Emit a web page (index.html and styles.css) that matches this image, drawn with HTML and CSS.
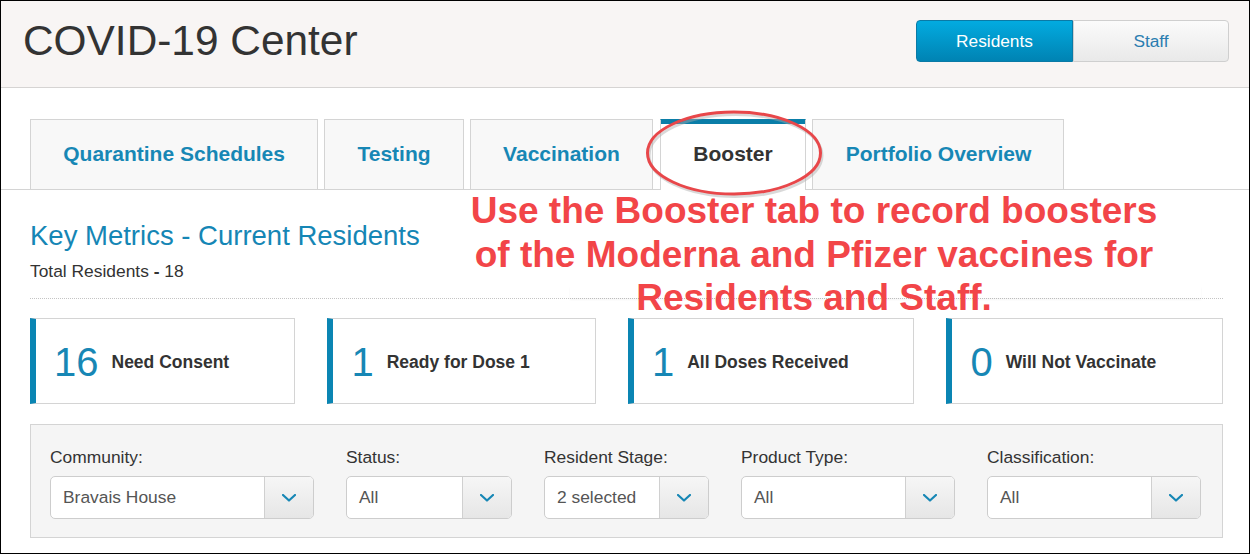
FILE: index.html
```html
<!DOCTYPE html>
<html lang="en">
<head>
<meta charset="utf-8">
<title>COVID-19 Center</title>
<link rel="stylesheet" href="styles.css">
</head>
<body>
<div class="frame">
  <header class="topbar">
    <h1 class="title">COVID-19 Center</h1>
    <div class="toggle">
      <button class="toggle-btn is-on">Residents</button>
      <button class="toggle-btn">Staff</button>
    </div>
  </header>

  <nav class="tabs">
    <a class="tab">Quarantine Schedules</a>
    <a class="tab">Testing</a>
    <a class="tab">Vaccination</a>
    <a class="tab is-active">Booster</a>
    <a class="tab">Portfolio Overview</a>
  </nav>

  <section class="metrics">
    <h2 class="metrics-title">Key Metrics - Current Residents</h2>
    <p class="metrics-total">Total Residents <b>-</b> 18</p>
    <div class="dots"></div>

    <div class="cards">
      <div class="card"><span class="card-num">16</span><span class="card-label">Need Consent</span></div>
      <div class="card"><span class="card-num">1</span><span class="card-label">Ready for Dose 1</span></div>
      <div class="card"><span class="card-num">1</span><span class="card-label">All Doses Received</span></div>
      <div class="card"><span class="card-num">0</span><span class="card-label">Will Not Vaccinate</span></div>
    </div>

    <div class="filters">
      <div class="filter">
        <label class="filter-label">Community:</label>
        <div class="select"><span class="select-value">Bravais House</span><span class="select-btn"><svg class="chev" viewBox="0 0 14 8"><path d="M1 1l6 5.5L13 1"/></svg></span></div>
      </div>
      <div class="filter">
        <label class="filter-label">Status:</label>
        <div class="select"><span class="select-value">All</span><span class="select-btn"><svg class="chev" viewBox="0 0 14 8"><path d="M1 1l6 5.5L13 1"/></svg></span></div>
      </div>
      <div class="filter">
        <label class="filter-label">Resident Stage:</label>
        <div class="select"><span class="select-value">2 selected</span><span class="select-btn"><svg class="chev" viewBox="0 0 14 8"><path d="M1 1l6 5.5L13 1"/></svg></span></div>
      </div>
      <div class="filter">
        <label class="filter-label">Product Type:</label>
        <div class="select"><span class="select-value">All</span><span class="select-btn"><svg class="chev" viewBox="0 0 14 8"><path d="M1 1l6 5.5L13 1"/></svg></span></div>
      </div>
      <div class="filter">
        <label class="filter-label">Classification:</label>
        <div class="select"><span class="select-value">All</span><span class="select-btn"><svg class="chev" viewBox="0 0 14 8"><path d="M1 1l6 5.5L13 1"/></svg></span></div>
      </div>
    </div>
  </section>

  <svg class="ring" viewBox="0 0 190 100" width="190" height="100">
    <ellipse cx="94" cy="49" rx="86.5" ry="41" fill="none" stroke="#aaa" stroke-opacity="0.45" stroke-width="3" transform="translate(1.5 2.5)"/>
    <ellipse cx="94" cy="49" rx="86.5" ry="41" fill="none" stroke="#e8474a" stroke-width="3"/>
  </svg>

  <div class="annotation">Use the Booster tab to record boosters<br>of the Moderna and Pfizer vaccines for<br>Residents and Staff.</div>
</div>
</body>
</html>
```

FILE: styles.css
```css
* { box-sizing: border-box; }

html, body {
  margin: 0;
  padding: 0;
  background: #fff;
}

body {
  font-family: "Liberation Sans", Arial, sans-serif;
  color: #333;
}

.frame {
  position: relative;
  width: 1250px;
  height: 554px;
  border: 1px solid #000;
  overflow: hidden;
  background: #fff;
}

/* ---------- header ---------- */
.topbar {
  display: flex;
  justify-content: space-between;
  align-items: flex-start;
  height: 87px;
  padding: 16px 20px 0 22px;
  background: #f8f5f4;
  border-bottom: 1px solid #d6d4d3;
}

.title {
  margin: 0;
  font-size: 42.4px;
  line-height: 48px;
  font-weight: 400;
  color: #333;
}

.toggle {
  display: flex;
  margin-top: 3px;
}

.toggle-btn {
  height: 42px;
  width: 156px;
  font-family: inherit;
  font-size: 17.3px;
  border: 1px solid #cfcfcf;
  background: linear-gradient(#fbfbfb, #e9e9e9);
  color: #2a7db0;
  padding: 0;
  border-radius: 0 4px 4px 0;
}

.toggle-btn.is-on {
  width: 157px;
  color: #fff;
  background: linear-gradient(#02abe0, #0083b3);
  border-color: #0a7aa6;
  border-radius: 4px 0 0 4px;
}

/* ---------- tabs ---------- */
.tabs {
  display: flex;
  gap: 6px;
  padding: 31px 0 0 29px;
  border-bottom: 1px solid #d4d4d4;
}

.tab {
  display: flex;
  align-items: center;
  height: 70px;
  padding: 0 32.25px 2px;
  border: 1px solid #d4d4d4;
  border-bottom: none;
  background: #f8f8f8;
  font-size: 21px;
  font-weight: 700;
  color: #1787b5;
}

.tab.is-active {
  height: 71px;
  margin-bottom: -1px;
  margin-left: 1px;
  margin-right: 0.5px;
  background: #fff;
  color: #333;
  border-top-color: #0a7ea8;
  box-shadow: inset 0 4px 0 #0a7ea8;
}

/* ---------- metrics ---------- */
.metrics {
  padding: 0 26px 0 29px;
}

.metrics-title {
  margin: 30px 0 0;
  font-size: 27.5px;
  line-height: 32px;
  font-weight: 400;
  color: #1586b5;
}

.metrics-total {
  margin: 9px 0 0;
  font-size: 17.4px;
  line-height: 20px;
  color: #333;
}

.dots {
  margin-top: 17px;
  border-top: 1px dotted #c4c4c4;
}

.cards {
  display: grid;
  grid-template-columns: 265fr 268fr 286fr 276fr;
  column-gap: 32px;
  margin-top: 19px;
}

.card {
  display: flex;
  align-items: center;
  height: 86px;
  padding: 2px 10px 0 18px;
  border: 1px solid #d4d4d4;
  border-left: 6px solid #0a85b3;
  background: #fff;
}

.card-num {
  font-size: 40px;
  line-height: 40px;
  color: #1787b5;
  margin-right: 13px;
}

.card-label {
  font-size: 17.5px;
  line-height: 20px;
  font-weight: 700;
  color: #333;
}

/* ---------- filters ---------- */
.filters {
  display: grid;
  grid-template-columns: 264px 166px 165px 214px 214px;
  column-gap: 32px;
  margin-top: 20px;
  padding: 22px 20px 18px 19px;
  background: #f5f5f5;
  border: 1px solid #d4d4d4;
}

.filter-label {
  display: block;
  font-size: 17.4px;
  line-height: 20px;
  color: #333;
}

.select {
  display: flex;
  height: 43px;
  margin-top: 9px;
  border: 1px solid #cdcdcd;
  border-radius: 5px;
  background: #fff;
  overflow: hidden;
}

.select-value {
  flex: 1;
  display: flex;
  align-items: center;
  padding-left: 12px;
  font-size: 17.4px;
  color: #555;
}

.select-btn {
  display: flex;
  align-items: center;
  justify-content: center;
  width: 49px;
  border-left: 1px solid #d0d0d0;
  background: linear-gradient(#f6f6f6, #e6e6e6);
}

.chev {
  width: 14px;
  height: 8px;
  fill: none;
  stroke: #1787b5;
  stroke-width: 2.2;
  stroke-linecap: round;
  stroke-linejoin: round;
}

/* ---------- overlays ---------- */
.ring {
  position: absolute;
  left: 639px;
  top: 103px;
  overflow: visible;
}

.annotation {
  position: absolute;
  left: 433px;
  top: 188px;
  width: 760px;
  z-index: 1;
  text-align: center;
  font-size: 37px;
  line-height: 43.5px;
  font-weight: 700;
  color: #f24548;
}

.annotation::before {
  content: "";
  position: absolute;
  left: 136px;
  width: 631px;
  top: 97px;
  height: 12px;
  background: #fff;
  box-shadow: 0 2px 2px rgba(0, 0, 0, 0.04);
  z-index: -1;
}
```
